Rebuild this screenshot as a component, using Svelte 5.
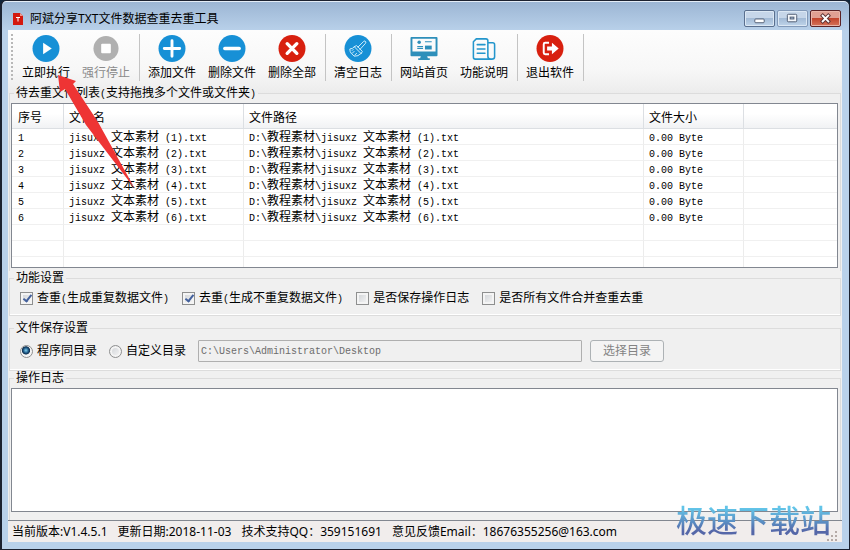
<script lang="ts">
  const files = [1, 2, 3, 4, 5, 6].map((n) => ({
    no: String(n),
    name: `jisuxz 文本素材 (${n}).txt`,
    path: `D:\\教程素材\\jisuxz 文本素材 (${n}).txt`,
    size: "0.00 Byte",
  }));
  const emptyRows = [1, 2, 3];

  const toolGroups = [
    [
      { icon: "run", label: "立即执行" },
      { icon: "stop", label: "强行停止", disabled: true },
    ],
    [
      { icon: "add", label: "添加文件" },
      { icon: "remove", label: "删除文件" },
      { icon: "clear", label: "删除全部" },
    ],
    [{ icon: "brush", label: "清空日志" }],
    [
      { icon: "site", label: "网站首页" },
      { icon: "help", label: "功能说明" },
    ],
    [{ icon: "exit", label: "退出软件" }],
  ];

  let options = $state([
    { label: "查重(生成重复数据文件)", checked: true },
    { label: "去重(生成不重复数据文件)", checked: true },
    { label: "是否保存操作日志", checked: false },
    { label: "是否所有文件合并查重去重", checked: false },
  ]);

  let target = $state("same");
  let directory = $state("C:\\Users\\Administrator\\Desktop");
  let log = $state("");

  const status = [
    "当前版本:V1.4.5.1",
    "更新日期:2018-11-03",
    "技术支持QQ：359151691",
    "意见反馈Email：18676355256@163.com",
  ];

  // latin runs are set half as wide as the chinese ones
  function runs(text: string) {
    return text.match(/[\x20-\x7e]+|[^\x20-\x7e]+/g) ?? [];
  }
</script>

{#snippet mixed(text: string)}{#each runs(text) as run}{#if /^[\x20-\x7e]/.test(run)}<span class="latin">{run}</span>{:else}{run}{/if}{/each}{/snippet}

{#snippet icon(name: string)}
  <svg class="icon" viewBox="0 0 28 28" aria-hidden="true">
    {#if name === "run"}
      <circle cx="14" cy="14" r="14" fill="#1790d6" />
      <path d="M11 8l9 6-9 6z" fill="#fff" />
    {:else if name === "stop"}
      <circle cx="14" cy="14" r="13" fill="#b0b0b0" />
      <rect x="9" y="9" width="10" height="10" rx="1" fill="#fff" />
    {:else if name === "add"}
      <circle cx="14" cy="14" r="14" fill="#1790d6" />
      <path d="M14 6v16M6 14h16" stroke="#fff" stroke-width="3" stroke-linecap="round" />
    {:else if name === "remove"}
      <circle cx="14" cy="14" r="14" fill="#1790d6" />
      <path d="M6.5 14h15" stroke="#fff" stroke-width="3.5" stroke-linecap="round" />
    {:else if name === "clear"}
      <circle cx="14" cy="14" r="14" fill="#d8200f" />
      <path d="M9 9l10 10M19 9L9 19" stroke="#fff" stroke-width="3.5" stroke-linecap="round" />
    {:else if name === "brush"}
      <circle cx="14" cy="14" r="14" fill="#1790d6" />
      <g fill="none" stroke="#d4effc" stroke-width="1" stroke-linejoin="round" stroke-linecap="round">
        <path d="M14 12.5l6-6q1.500-1 2 .5t-.5 2L16 15" />
        <path d="M10.500 12l2-1 6 6-1 2zM10.500 12q-2 2.500-5 2.500 0 3 1.500 4.500t3 3q4 .5 7.500-3M8 19l2-2M10.500 21l2-2M8 16l1-1" />
      </g>
    {:else if name === "site"}
      <path d="M1 3h26v18H1z" fill="none" stroke="#2e8fba" stroke-width="2" stroke-linejoin="round" />
      <path d="M1 17h26v4H1zM11 21h6l1 3h2v2H8v-2h2z" fill="#2e8fba" />
      <circle cx="9" cy="7.500" r="1.800" fill="#2e8fba" />
      <path d="M15 7h7M7 12h6M7 14h6" stroke="#2e8fba" stroke-width="1.200" />
      <path d="M15 11h7v4h-7z" fill="#2e8fba" />
    {:else if name === "help"}
      <g fill="none" stroke="#2496cc" stroke-width="1.600" stroke-linejoin="round" stroke-linecap="round">
        <path d="M18 22V6q0-2-2-2H6L3 7v16q0 2 2 2h17q3 0 3-2.500V10q0-2-2-2h-5M18 22q0 3 3 3" />
        <path d="M7 10h8M7 14.500h8M7 19h8" />
      </g>
    {:else}
      <circle cx="14" cy="14" r="14" fill="#d8200f" />
      <path d="M13 8H9q-1.500 0-1.500 1.500v9Q7.500 20 9 20h4" fill="none" stroke="#fff" stroke-width="2" />
      <path d="M11 12h5V8l7 6-7 6v-4h-5z" fill="#fff" />
    {/if}
  </svg>
{/snippet}

<main class="window">
  <header class="titlebar">
    <svg class="app-icon" viewBox="0 0 10 12" aria-hidden="true">
      <path d="M0 0h7l3 3v9H0z" fill="#d4190f" />
      <path d="M7 0l3 3H7z" fill="#f09a90" />
      <path d="M3 4.500h4M5 4.500v4" stroke="#fff" stroke-width="1" />
    </svg>
    <h1>阿斌分享TXT文件数据查重去重工具</h1>
    <div class="controls">
      <button aria-label="最小化">
        <svg viewBox="0 0 30 16"><rect x="10" y="8.500" width="10" height="4" rx="1" fill="#fff" stroke="#4d5a70" /></svg>
      </button>
      <button class="dim" aria-label="最大化" disabled>
        <svg viewBox="0 0 30 16">
          <rect x="9.500" y="3.500" width="10" height="8" rx="1" fill="#f4f7fb" stroke="#4d5a70" />
          <rect x="12.500" y="6.500" width="4" height="2" fill="#a9bfd9" stroke="#4d5a70" />
        </svg>
      </button>
      <button class="close" aria-label="关闭">
        <svg viewBox="0 0 30 16">
          <path d="M12 5l6 6M18 5l-6 6" stroke="#5b3234" stroke-width="4" stroke-linecap="square" />
          <path d="M12 5l6 6M18 5l-6 6" stroke="#fff" stroke-width="2" stroke-linecap="square" />
        </svg>
      </button>
    </div>
  </header>

  <div class="content">
    <nav class="toolbar">
      {#each toolGroups as group}
        <div class="tool-group">
          {#each group as tool}
            <button class="tool" disabled={tool.disabled}>
              {@render icon(tool.icon)}
              <span>{tool.label}</span>
            </button>
          {/each}
        </div>
      {/each}
    </nav>

    <fieldset class="files">
      <legend>{@render mixed("待去重文件列表(支持拖拽多个文件或文件夹)")}</legend>
      <div class="list">
        <table>
          <colgroup>
            <col class="col-no" />
            <col class="col-name" />
            <col class="col-path" />
            <col class="col-size" />
            <col />
          </colgroup>
          <thead>
            <tr><th>序号</th><th>文件名</th><th>文件路径</th><th>文件大小</th><th></th></tr>
          </thead>
          <tbody>
            {#each files as file}
              <tr>
                <td>{@render mixed(file.no)}</td>
                <td>{@render mixed(file.name)}</td>
                <td>{@render mixed(file.path)}</td>
                <td>{@render mixed(file.size)}</td>
                <td></td>
              </tr>
            {/each}
            {#each emptyRows as _}
              <tr><td></td><td></td><td></td><td></td><td></td></tr>
            {/each}
          </tbody>
        </table>
      </div>
    </fieldset>

    <fieldset class="features">
      <legend>功能设置</legend>
      <div class="row">
        {#each options as option}
          <label>
            <input type="checkbox" bind:checked={option.checked} />
            <span>{@render mixed(option.label)}</span>
          </label>
        {/each}
      </div>
    </fieldset>

    <fieldset class="saving">
      <legend>文件保存设置</legend>
      <div class="row">
        <label><input type="radio" value="same" bind:group={target} />程序同目录</label>
        <label><input type="radio" value="custom" bind:group={target} />自定义目录</label>
        <input
          class="directory"
          type="text"
          aria-label="自定义目录"
          bind:value={directory}
          disabled={target === "same"}
        />
        <button class="browse" disabled={target === "same"}>选择目录</button>
      </div>
    </fieldset>

    <fieldset class="log">
      <legend>操作日志</legend>
      <textarea aria-label="操作日志" bind:value={log} readonly></textarea>
    </fieldset>

    <footer>
      {#each status as item}
        <span>{item}</span>
      {/each}
      <svg class="grip" viewBox="0 0 11 11" aria-hidden="true">
        <path d="M8 0h2v2H8zM4 4h2v2H4zM8 4h2v2H8zM0 8h2v2H0zM4 8h2v2H4zM8 8h2v2H8z" fill="#b5aaa6" />
      </svg>
    </footer>
  </div>

  <svg class="pointer" viewBox="0 0 80 114" aria-hidden="true">
    <path d="M0 0L2 17L7 14L28 50L77 114L40 47L15 9L18 6z" fill="#ee3434" />
  </svg>
  <div class="watermark">极速下载站</div>
</main>

<style>
  :global(body) {
    margin: 0;
    background: #10253a;
  }

  .window {
    position: relative;
    box-sizing: border-box;
    display: flex;
    flex-direction: column;
    height: 100vh;
    padding: 0 7px 7px 6px;
    border: 1px solid #1c2230;
    border-left-width: 2px;
    border-radius: 6px 6px 0 0;
    background: linear-gradient(#9bb5d3, #b9d1ea 30px, #b9d1ea);
    box-shadow: inset 0 1px #e4edf7;
    font-family: "Noto Sans", "Noto Sans CJK SC", sans-serif;
    font-size: 12px;
    line-height: 16px;
    color: #000;
  }

  button,
  input,
  textarea {
    margin: 0;
    font: inherit;
    color: inherit;
  }

  .titlebar {
    display: flex;
    align-items: center;
    height: 29px;
    padding: 6px 0 0 5px;
    box-sizing: border-box;
  }

  .app-icon {
    width: 10px;
    height: 12px;
  }

  h1 {
    flex: 1;
    margin: 0 0 0 7px;
    font-size: 12px;
    font-weight: 400;
  }

  .controls {
    display: flex;
    gap: 2px;
    margin-right: 1px;
  }

  .controls button {
    width: 31px;
    height: 17px;
    padding: 0;
    border: 1px solid #5a6f8e;
    border-radius: 2px;
    background: linear-gradient(#c6d6e9 50%, #a3bbd6 50%, #bfd4ea);
    box-shadow: inset 0 0 0 1px #dce8f4;
  }

  .controls .dim {
    border-color: #8299b8;
  }

  .controls .close {
    border-color: #5b2326;
    background: linear-gradient(#e0a093 50%, #c2452d 50%, #d5745a);
    box-shadow: inset 0 0 0 1px #e9b5a9;
  }

  .controls svg {
    display: block;
    width: 100%;
    height: 100%;
  }

  .content {
    flex: 1;
    display: flex;
    flex-direction: column;
    min-height: 0;
    background: linear-gradient(#fdfdfd, #f7f7f7 40px, #ececec 63px, #f0f0f0 64px);
  }

  .toolbar {
    display: flex;
    flex: none;
    align-items: flex-start;
    height: 56px;
    padding: 4px 0 0 6px;
    background: repeating-linear-gradient(#b8b8b8 0 2px, transparent 2px 4px) 3px 4px / 2px 46px no-repeat;
    box-sizing: border-box;
  }

  .tool-group {
    display: flex;
    height: 47px;
    padding: 0 3px 0 2px;
    border-right: 1px solid #c4c4c4;
  }

  .tool {
    display: flex;
    flex-direction: column;
    align-items: center;
    width: 60px;
    padding: 1px 0 0;
    gap: 3px;
    border: 0;
    background: none;
  }

  .tool:disabled {
    color: #8a8a8a;
  }

  .icon {
    width: 28px;
    height: 28px;
  }

  fieldset {
    flex: none;
    min-width: 0;
    margin: 0 1px;
    padding: 0 2px 0 1px;
    border: 1px solid #dcdcdc;
    box-shadow: inset 0 -1px #fff;
  }

  legend {
    margin-left: 3px;
    padding: 0 2px;
    line-height: 14px;
  }

  .latin {
    font-family: "Liberation Mono", monospace;
    font-size: 10px;
    line-height: 10px;
  }

  .files {
    height: 185px;
    box-sizing: border-box;
    border-bottom: 0;
    box-shadow: none;
  }

  .list {
    height: 163px;
    margin-top: 3px;
    border: 1px solid #828790;
    background: #fff;
    overflow: hidden;
  }

  table {
    width: 100%;
    table-layout: fixed;
    border-collapse: separate;
    border-spacing: 0;
  }

  .col-no {
    width: 52px;
  }

  .col-name {
    width: 180px;
  }

  .col-path {
    width: 400px;
  }

  .col-size {
    width: 100px;
  }

  th,
  td {
    padding: 0 0 0 5px;
    border-right: 1px solid #ececec;
    border-bottom: 1px solid #f0f0f0;
    text-align: left;
    font-weight: 400;
    white-space: nowrap;
  }

  th:first-child,
  td:first-child {
    padding-left: 6px;
  }

  th:last-child,
  td:last-child {
    border-right: 0;
  }

  th {
    height: 25px;
    padding-top: 3px;
    border-color: #dcdfe3;
    background: linear-gradient(#fff 40%, #f1f2f4);
    box-sizing: border-box;
  }

  td {
    height: 16px;
    box-sizing: border-box;
    line-height: 14px;
  }

  .features {
    height: 45px;
    box-sizing: border-box;
  }

  .saving {
    margin-top: 5px;
    height: 50px;
    box-sizing: border-box;
  }

  .row {
    display: flex;
    align-items: center;
    padding: 5px 0 0 9px;
  }

  .features .row {
    gap: 13px;
  }

  .saving .row {
    gap: 12px;
  }

  label {
    display: flex;
    align-items: center;
    gap: 4px;
    white-space: nowrap;
  }

  input[type="checkbox"],
  input[type="radio"] {
    appearance: none;
    flex: none;
    width: 13px;
    height: 13px;
    border: 1px solid #8e8f8f;
    background: linear-gradient(135deg, #cdd0d4, #f8f8f8);
    box-shadow: inset 0 0 0 2px #f4f4f4;
  }

  input[type="checkbox"]:checked::before {
    content: "";
    display: block;
    width: 3px;
    height: 7px;
    margin: 0 0 0 4px;
    border: solid #43609c;
    border-width: 0 2px 2px 0;
    transform: rotate(38deg);
  }

  input[type="radio"] {
    border-radius: 50%;
  }

  input[type="radio"]:checked {
    background: radial-gradient(circle at 45% 40%, #7fd0f0, #1b5380 30%, #12314f 42%, #f4f4f4 50%);
    box-shadow: none;
  }

  .directory {
    flex: 0 1 384px;
    min-width: 0;
    height: 22px;
    padding: 0 2px;
    box-sizing: border-box;
    border: 1px solid #afafaf;
    border-radius: 1px;
    background: #f0f0f0;
    font-family: "Liberation Mono", monospace;
    font-size: 10px;
    color: #6d6d6d;
  }

  .browse {
    width: 74px;
    height: 22px;
    padding: 0;
    margin-left: -4px;
    border: 1px solid #adb2b5;
    border-radius: 3px;
    background: #f4f4f4;
  }

  .browse:disabled {
    color: #838383;
  }

  .log {
    flex: 1;
    display: flex;
    flex-direction: column;
    border-bottom: 0;
    box-shadow: none;
  }

  textarea {
    flex: 1;
    margin: 3px 0 8px;
    border: 1px solid #828790;
    background: #fff;
    resize: none;
    outline: 0;
  }

  footer {
    display: flex;
    align-items: center;
    gap: 10px;
    height: 20px;
    padding: 1px 4px 0;
    border-top: 1px solid #828790;
    background: #f1edec;
    white-space: nowrap;
  }

  .grip {
    width: 11px;
    height: 11px;
    margin-left: auto;
    align-self: flex-end;
  }

  .pointer {
    position: absolute;
    left: 56px;
    top: 74px;
    width: 80px;
    height: 114px;
    overflow: visible;
    pointer-events: none;
  }

  .watermark {
    position: absolute;
    right: 18px;
    bottom: 10px;
    background: linear-gradient(#62c4e8 20%, #5567a8 80%);
    background-clip: text;
    color: transparent;
    font-size: 31px;
    font-weight: 500;
    line-height: 38px;
    pointer-events: none;
  }
</style>
